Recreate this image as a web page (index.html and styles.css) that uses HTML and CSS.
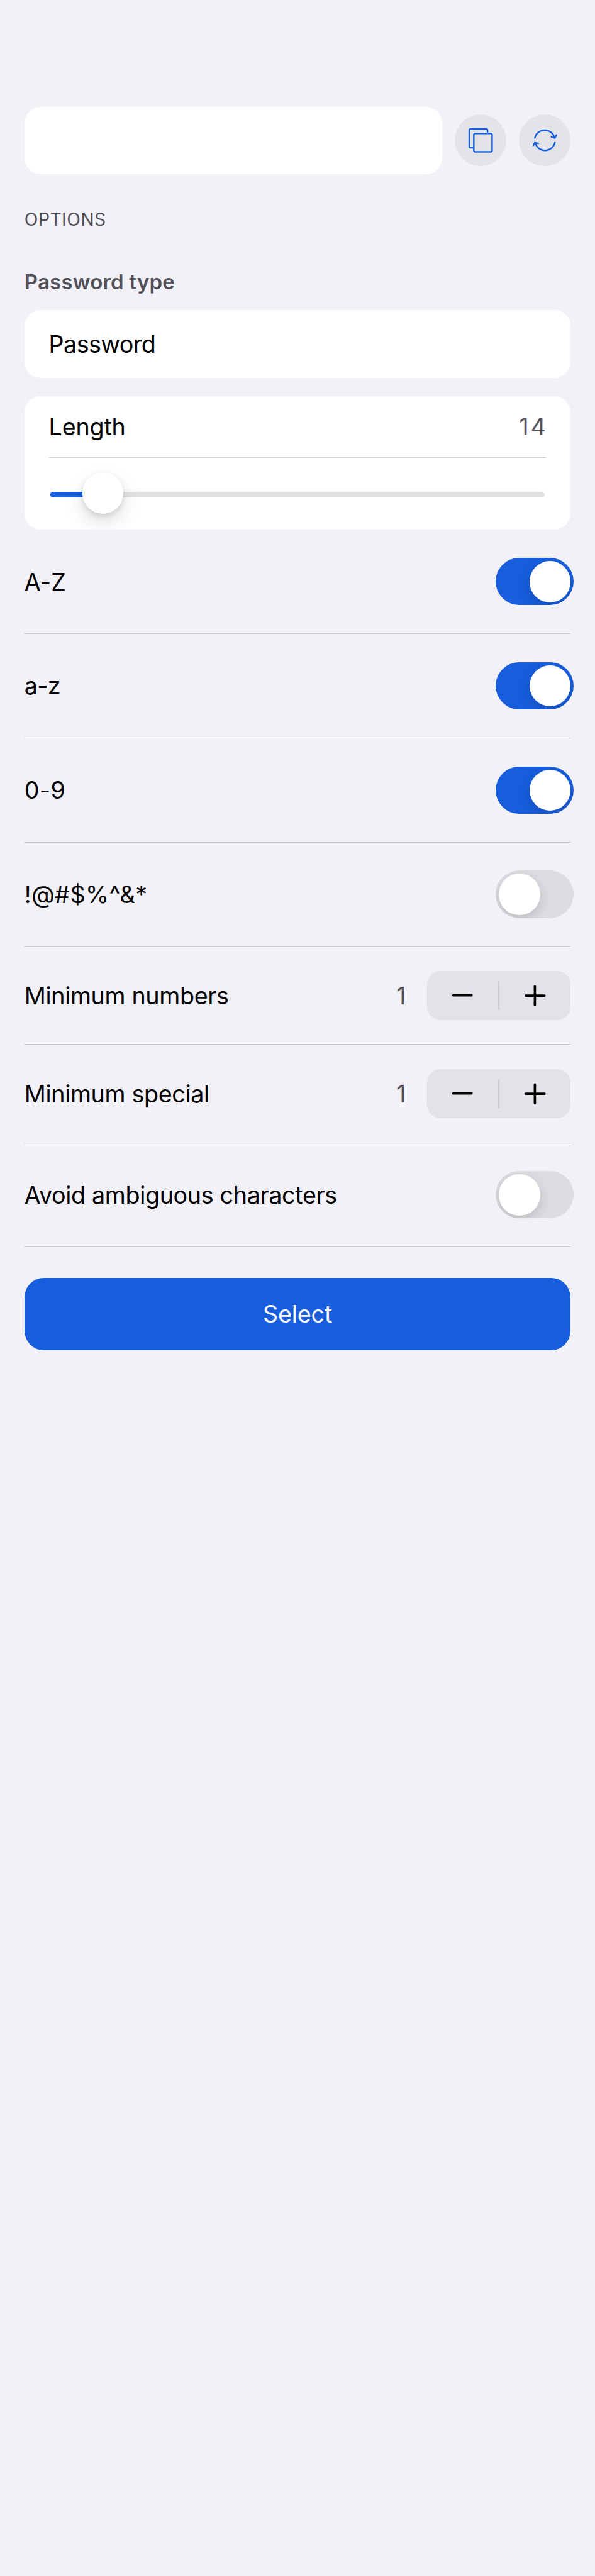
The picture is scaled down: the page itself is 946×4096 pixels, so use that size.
FILE: index.html
```html
<!DOCTYPE html>
<html lang="en">
<head>
<meta charset="utf-8">
<title>Generator</title>
<link rel="stylesheet" href="styles.css">
</head>
<body>
<main class="screen">
  <div class="value-row">
    <div class="value-box"></div>
    <button class="round" aria-label="Copy">
      <svg viewBox="0 0 102 102" fill="none" stroke="#175ddc" stroke-width="3" stroke-linejoin="round">
        <path d="M37.5 65.500H31.500a3 3 0 0 1-3-3v-31a3 3 0 0 1 3-3H61.500a3 3 0 0 1 3 3V37"/>
        <rect x="37.500" y="37.500" width="36" height="36" rx="3"/>
      </svg>
    </button>
    <button class="round" aria-label="Regenerate">
      <svg viewBox="0 0 102 102" fill="none" stroke="#175ddc" stroke-width="3" stroke-linecap="round" stroke-linejoin="round">
        <path d="M31.300 46.500a20 20 0 0 1 39 0M64 44l6.600 2.500L73.800 40.500"/>
        <path d="M71 54.500a20 20 0 0 1-39.300 0M38 57.300l-6.400-2.500L28.500 61"/>
      </svg>
    </button>
  </div>
  <h2 class="section">OPTIONS</h2>
  <h3 class="field-label">Password type</h3>
  <div class="card card-field"><span class="t-password">Password</span></div>
  <div class="card card-slider">
    <div class="length-row"><span class="t-length">Length</span><span class="num total">14</span></div>
    <div class="slider"><div class="track"><div class="fill"></div></div><div class="knob"></div></div>
  </div>
  <div class="row"><span class="t-upper">A-Z</span><div class="toggle on"><i></i></div></div>
  <div class="row"><span class="t-lower">a-z</span><div class="toggle on"><i></i></div></div>
  <div class="row"><span class="t-upper">0-9</span><div class="toggle on"><i></i></div></div>
  <div class="row"><span class="t-symbols">!@#$%^&amp;*</span><div class="toggle"><i></i></div></div>
  <div class="row row-step"><span class="t-long">Minimum numbers</span><span class="num count">1</span>
    <div class="stepper"><svg viewBox="0 0 282 96" stroke-linecap="round"><path d="M141 22v53" stroke="#cfced3" stroke-width="3"/><path d="M51.500 47.800h36M194 48.300h37M212 30v37" stroke="#000" stroke-width="4.600"/></svg></div>
  </div>
  <div class="row row-step"><span class="t-long">Minimum special</span><span class="num count">1</span>
    <div class="stepper"><svg viewBox="0 0 282 96" stroke-linecap="round"><path d="M141 22v53" stroke="#cfced3" stroke-width="3"/><path d="M51.500 47.800h36M194 48.300h37M212 30v37" stroke="#000" stroke-width="4.600"/></svg></div>
  </div>
  <div class="row"><span class="t-long">Avoid ambiguous characters</span><div class="toggle"><i></i></div></div>
  <button class="select">Select</button>
</main>
</body>
</html>
```
FILE: styles.css
```css
:root { --u: 0.80855px; }
* { box-sizing: border-box; }
html { background: #f2f1f7; }
body { margin: 0; background: #f2f1f7; }
button { border: 0; padding: 0; font: inherit; }
.screen {
  min-height: 4096px;
  padding: calc(210 * var(--u)) calc(48 * var(--u)) 0;
  font-family: Inter, "Liberation Sans", sans-serif;
  font-size: 37.7px;
  line-height: calc(60 * var(--u));
  color: #000;
}
.value-row {
  display: flex;
  align-items: center;
  gap: calc(24 * var(--u));
  height: calc(132 * var(--u));
}
.value-box { flex: 1; height: 100%; background: #fff; border-radius: calc(32 * var(--u)); }
.round {
  width: calc(102 * var(--u));
  height: calc(102 * var(--u));
  border-radius: 50%;
  background: #e2e4e8;
}
.round svg { display: block; width: 100%; height: 100%; }
.section {
  margin: calc(60 * var(--u)) 0 0;
  height: calc(60 * var(--u));
  font-size: 28.3px;
  font-weight: 400;
  letter-spacing: 0.45px;
  color: #525159;
}
.field-label {
  margin: calc(62 * var(--u)) 0 0;
  height: calc(86 * var(--u));
  font-size: 33px;
  font-weight: 600;
  letter-spacing: 0.2px;
  color: #525159;
}
.card { background: #fff; border-radius: calc(32 * var(--u)); padding: 0 calc(48 * var(--u)); overflow: hidden; }
.card-field { height: calc(133 * var(--u)); display: flex; align-items: center; }
.card-slider { height: calc(263 * var(--u)); margin-top: calc(36 * var(--u)); }
.length-row {
  display: flex;
  justify-content: space-between;
  align-items: center;
  height: calc(122 * var(--u));
  border-bottom: 1px solid #d0d0d2;
}
.t-password { letter-spacing: -0.6px; }
.t-length { letter-spacing: -0.2px; }
.t-upper { letter-spacing: 0.25px; }
.t-lower { letter-spacing: -0.8px; }
.t-symbols { letter-spacing: 0.5px; }
.t-long { letter-spacing: -0.355px; }
.num { color: #525159; }
.total { letter-spacing: 3.2px; margin-right: -3px; }
.slider {
  position: relative;
  height: calc(141 * var(--u));
  padding: calc(66 * var(--u)) calc(3 * var(--u)) 0;
}
.track { height: calc(12 * var(--u)); border-radius: calc(6 * var(--u)); background: #e3e3e5; overflow: hidden; }
.fill { width: calc(100 * var(--u)); height: 100%; background: #175ddc; }
.knob {
  position: absolute;
  left: calc(66 * var(--u));
  top: calc(28 * var(--u));
  width: calc(81 * var(--u));
  height: calc(81 * var(--u));
  border-radius: 50%;
  background: #fff;
  box-shadow: 0 calc(18 * var(--u)) calc(39 * var(--u)) rgba(0, 0, 0, .12), 0 calc(5 * var(--u)) calc(12 * var(--u)) rgba(0, 0, 0, .12);
}
.row {
  display: flex;
  align-items: center;
  justify-content: space-between;
  height: calc(205 * var(--u));
  border-bottom: 1px solid #c7c6cb;
}
.row-step { height: calc(193 * var(--u)); }
.toggle {
  width: calc(153 * var(--u));
  height: calc(93 * var(--u));
  margin-right: calc(-6 * var(--u));
  padding: calc(6 * var(--u));
  border-radius: calc(47 * var(--u));
  background: #dddce1;
  display: flex;
  overflow: hidden;
}
.toggle.on { background: #175ddc; justify-content: flex-end; }
.toggle i {
  width: calc(81 * var(--u));
  height: calc(81 * var(--u));
  border-radius: 50%;
  background: #fff;
  box-shadow: 0 calc(9 * var(--u)) calc(24 * var(--u)) rgba(0, 0, 0, .15);
}
.count { margin-left: auto; margin-right: calc(42 * var(--u)); }
.stepper {
  width: calc(282 * var(--u));
  height: calc(96 * var(--u));
  border-radius: calc(26 * var(--u));
  background: #e3e2e7;
}
.stepper svg { display: block; width: 100%; height: 100%; }
.select {
  display: block;
  width: 100%;
  height: calc(142 * var(--u));
  margin-top: calc(60 * var(--u));
  border-radius: calc(38 * var(--u));
  background: #175ddc;
  color: #fff;
  letter-spacing: -0.15px;
}
```
